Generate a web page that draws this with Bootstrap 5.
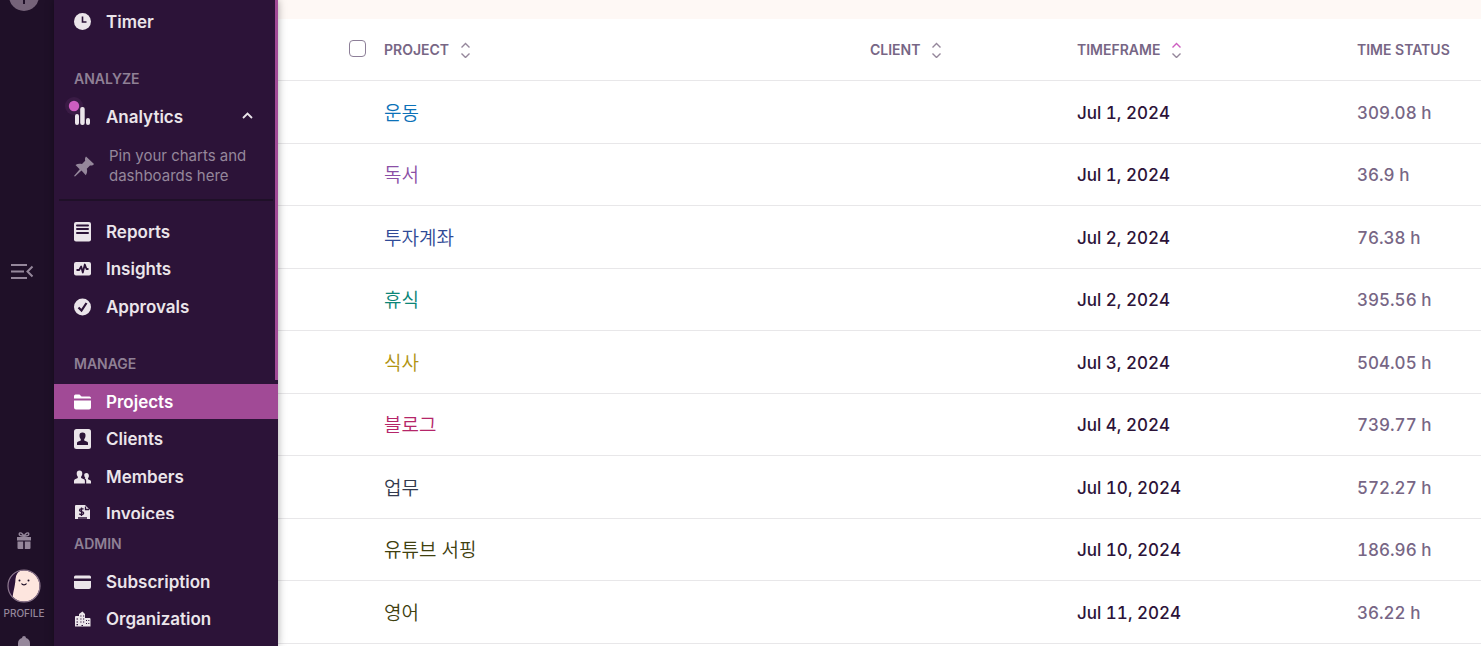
<!DOCTYPE html>
<html lang="en">
<head>
<meta charset="utf-8">
<meta name="viewport" content="width=device-width, initial-scale=1">
<title>Projects</title>
<link href="https://cdn.jsdelivr.net/npm/bootstrap@5.3.0/dist/css/bootstrap.min.css" rel="stylesheet">
<style>
  body { font-family: Inter, "Noto Sans CJK KR", sans-serif; color: #2c1338; background: #fff; }
  .rail { width: 54px; background: #1f1028; color: #95879b; padding-right: 6px; }
  .rail button, .rail a { color: inherit; background: none; border: 0; padding: 0; display: block; text-decoration: none; }
  .rail svg, .side svg, .sorter svg { display: block; }
  .rail .rail-add { margin-top: -19px; }
  .rail-foot { gap: 20px; margin-bottom: -8px; }
  .profile-link { font-size: 10px; line-height: 12px; font-weight: 500; text-align: center; }
  .profile-link svg { margin: 0 auto 4px; }
  .rail-foot .bell { margin-top: -3px; }

  .side { width: 224px; background: #2c1338; color: #ebe5ea; box-shadow: 0 0 8px rgba(0,0,0,.35); z-index: 1; }
  .side-scroll { min-height: 0; padding-top: 4px; }
  .side-thumb { right: 0; top: 0; width: 3px; height: 380px; background: #a14a96; }
  .side-title { font-size: 14px; line-height: 20px; font-weight: 600; color: #8f8095; margin: 30px 0 10px; padding-left: 20px; }
  .side-foot { padding: 15px 0 10px; }
  .side-foot .side-title { margin-top: 0; }
  .side-list { list-style: none; margin: 0; padding: 0; }
  .side-list li:nth-child(odd) { margin-bottom: 2px; }
  .side-list li:nth-child(even) { margin-bottom: 3px; }
  .side-list li:last-child { margin-bottom: 0; }
  .side-item { display: flex; align-items: center; gap: 14px; width: 100%; height: 35px; padding: 0 25px 0 20px; border: 0; background: none; color: inherit; font-size: 17px; line-height: 24px; font-weight: 600; text-decoration: none; }
  .side-item.active { background: #a14a96; color: #fff; }
  .side-item svg { overflow: visible; flex: none; }
  .pin-note { gap: 14px; margin: 12px 0 13px; padding-left: 20px; font-size: 15px; line-height: 20px; color: #95879b; }
  .side-rule { height: 2px; background: #1f1028; margin: 0 5px 13px; }

  .banner { height: 19px; background: #fef8f5; }
  .projects { table-layout: fixed; width: 100%; border-collapse: collapse; }
  .projects th, .projects td { padding: 2px 0 0; border-bottom: 1px solid #e8e7e9; vertical-align: middle; white-space: nowrap; }
  .projects thead tr { height: 61px; }
  .projects th { font-size: 14px; line-height: 20px; font-weight: 600; color: #776685; }
  .projects tbody tr { height: 62px; }
  .projects tbody tr:nth-child(odd) { height: 63px; }
  .projects td { font-size: 17px; line-height: 24px; font-weight: 500; font-variant-numeric: tabular-nums; }
  .projects .hours { color: #776685; }
  .projects td a { display: inline-block; padding-top: 2px; font-size: 19px; font-weight: 350; text-decoration: none; }
  .col-check { width: 106px; } .col-client { width: 207px; } .col-frame { width: 280px; } .col-status { width: 124px; }
  .projects .form-check-input { display: block; width: 17px; height: 17px; margin: 0 0 4px 71px; border: 1px solid #8d7f98; border-radius: 4px; }
  .sorter { color: #95879b; background: none; border: 0; padding: 0; margin-left: 11px; }
  .c-blue { color: #0b71b8; } .c-violet { color: #8b4fa6; } .c-indigo { color: #2f4a96; } .c-teal { color: #0b8577; }
  .c-gold { color: #b09310; } .c-pink { color: #b52569; } .c-slate { color: #333a4d; } .c-olive { color: #40400f; }
</style>
</head>
<body>
<div class="d-flex vh-100 overflow-hidden">

  <nav class="rail d-flex flex-column align-items-center flex-shrink-0" aria-label="Workspace">
    <button type="button" class="rail-add" aria-label="Add">
      <svg width="30" height="30"><circle cx="15" cy="15" r="15" fill="#756379"/><path d="M15 8v15M8 15h14" stroke="#1f1028" stroke-width="2"/></svg>
    </button>
    <button type="button" class="my-auto" aria-label="Collapse menu">
      <svg width="26" height="18" fill="none" stroke="currentColor" stroke-width="2"><path d="M0 2h16M0 8.500h13M0 15h16M21.500 3.500l-5 5 5 5"/></svg>
    </button>
    <div class="rail-foot d-flex flex-column align-items-center">
      <button type="button" aria-label="Gifts">
        <svg width="16" height="17" fill="currentColor"><path d="M1 5h14v3.500H1zM1.500 9.500h5.700V17H2.500a1 1 0 0 1-1-1zM8.800 9.500h5.700V16a1 1 0 0 1-1 1H8.800z"/><path d="M8 4.500C7 1.500 3.500-.5 3.200 2c-.2 1.600 2 2.200 4.800 2.200 2.800 0 5-.6 4.800-2.200C12.500-.5 9 1.500 8 4.500z" fill="none" stroke="currentColor" stroke-width="1.400"/></svg>
      </button>
      <a href="#" class="profile-link">
        <svg width="34" height="34"><defs><clipPath id="face"><circle cx="17" cy="17" r="15.500"/></clipPath></defs>
          <circle cx="17" cy="17" r="16" fill="#2c1338"/>
          <path clip-path="url(#face)" d="M5.500 34C5 24 8 20 8.500 10 9 3 14 0 20 0h14v34z" fill="#fde5de"/>
          <circle cx="17" cy="17" r="16" fill="none" stroke="#8f7a90" stroke-width="1.200"/>
          <g fill="#1f1028"><circle cx="12.500" cy="11.500" r="1"/><circle cx="21.500" cy="11.500" r="1"/></g><path d="M14.500 14.500c1 1.700 4 1.700 5 0" fill="none" stroke="#1f1028" stroke-width="1.200"/></svg>
        PROFILE
      </a>
      <button type="button" class="bell" aria-label="Notifications">
        <svg width="16" height="18" fill="currentColor"><path d="M8 0a2 2 0 0 1 2 2c2.600.8 4 2.800 4 5.500V12l2 2v1H0v-1l2-2V7.500C2 4.800 3.400 2.800 6 2a2 2 0 0 1 2-2z"/></svg>
      </button>
    </div>
  </nav>

  <aside class="side d-flex flex-column flex-shrink-0 position-relative">
    <div class="side-scroll flex-fill overflow-hidden">
      <a href="#" class="side-item"><svg width="18" height="20"><circle cx="8.500" cy="9.500" r="8.500" fill="currentColor"/><path d="M8.500 4.500v5.500h4" fill="none" stroke="#2c1338" stroke-width="1.600"/></svg>Timer</a>

      <h2 class="side-title">ANALYZE</h2>
      <button type="button" class="side-item" aria-expanded="true">
        <svg width="18" height="20"><circle cx="0" cy="-1" r="9" fill="#3a1b45"/><g fill="currentColor"><rect x="1" y="7" width="4" height="11" rx="2"/><rect x="6.200" y="0" width="4.500" height="18" rx="2"/><rect x="12" y="11" width="4" height="7" rx="2"/></g><circle cx="0" cy="-1" r="5.200" fill="#cd5dc0"/></svg>
        Analytics
        <svg class="ms-auto" width="11" height="10" fill="none" stroke="currentColor" stroke-width="1.800"><path d="M1 6l4.500-4.500L10 6"/></svg>
      </button>
      <div class="pin-note d-flex align-items-center">
        <svg width="21" height="21" fill="currentColor"><path d="M12 0.500 20 8c-1 1.700-2.600 1.700-4 1.500l-3.200 3.200c.8 2.600.2 4.600-1 6.500l-4.300-4.700-6.500 6L0 20l5.700-6.800L1.500 9c2-1.300 4-1.600 6.500-.9l3.200-3.300C10.800 3.200 10.900 1.600 12 .5z"/></svg>
        <span>Pin your charts and<br>dashboards here</span>
      </div>
      <div class="side-rule"></div>
      <ul class="side-list">
        <li><a href="#" class="side-item"><svg width="18" height="20"><rect width="17" height="19.500" rx="2" fill="currentColor"/><path d="M3 3.500h11M3 7h11M3 11h11" stroke="#2c1338" stroke-width="2" stroke-linecap="round"/></svg>Reports</a></li>
        <li><a href="#" class="side-item"><svg width="18" height="20"><rect y="3" width="17" height="13.500" rx="2" fill="currentColor"/><path d="M2.500 11h2.700l2-3.500 1.600 6 2-8 1.700 4.500h2" fill="none" stroke="#2c1338" stroke-width="1.800" stroke-linejoin="round"/></svg>Insights</a></li>
        <li><a href="#" class="side-item"><svg width="18" height="20"><circle cx="8.500" cy="10" r="8.500" fill="currentColor"/><path d="M4.500 10.500l3 3 5-7.500" fill="none" stroke="#2c1338" stroke-width="2.200"/></svg>Approvals</a></li>
      </ul>

      <h2 class="side-title">MANAGE</h2>
      <ul class="side-list">
        <li><a href="#" class="side-item active" aria-current="page"><svg width="18" height="20" fill="currentColor"><path d="M0 6.500V4a1.500 1.500 0 0 1 1.500-1.500H5.500L7.500 4.500H15.500A1.500 1.500 0 0 1 17 6v.5zM0 8.500h17v7a2 2 0 0 1-2 2H2a2 2 0 0 1-2-2z"/></svg>Projects</a></li>
        <li><a href="#" class="side-item"><svg width="18" height="20"><rect width="17" height="20" rx="2.500" fill="currentColor"/><path d="M8.500 3.500a3 3 0 0 1 3 3.200c0 1.500-.6 2.800-1.300 3.500v1.300l3 1.200c.6.300.8.800.8 1.500V16H3v-1.800c0-.7.200-1.200.8-1.500l3-1.200v-1.300C6.100 9.500 5.500 8.200 5.500 6.700a3 3 0 0 1 3-3.200z" fill="#2c1338"/></svg>Clients</a></li>
        <li><a href="#" class="side-item"><svg width="18" height="20" fill="currentColor"><path d="M5.500 3.500c1.800 0 2.800 1.300 2.800 3 0 1.400-.5 2.500-1.200 3.200v1.200l2.800 1.300c.8.400 1 1 1 1.800v2.500H0V14c0-.8.300-1.400 1-1.800l2.800-1.300V9.700C3.100 9 2.700 7.900 2.700 6.500c0-1.700 1-3 2.800-3zM12.500 6c1.500 0 2.400 1.200 2.400 2.700 0 1.200-.4 2-.9 2.600v1l2.200 1c.6.300.8.700.8 1.300v1.900h-4.800v-2.600c0-1.300-.6-2-1.500-2.400.3-.2.500-.6.500-1-.6-.5-1-1.300-1-2.400C10.200 6.900 11 6 12.500 6z"/></svg>Members</a></li>
        <li><a href="#" class="side-item"><svg width="18" height="20"><path d="M1 2a1 1 0 0 1 1-1h9l5 5v13a1 1 0 0 1-1 1H2a1 1 0 0 1-1-1z" fill="currentColor"/><g fill="none" stroke="#2c1338" stroke-width="1.300"><path d="M4 14h9M11.500 2.500v3H15M9.500 5.300c-1-.9-4-.8-4 .9s4.200 1 4.200 2.800-3.200 2-4.400.7M7.500 3.500v8.500"/></g></svg>Invoices</a></li>
      </ul>
    </div>
    <div class="side-foot">
      <h2 class="side-title">ADMIN</h2>
      <ul class="side-list">
        <li><a href="#" class="side-item"><svg width="18" height="20" fill="currentColor"><path d="M0 6.500V5a1.500 1.500 0 0 1 1.500-1.500h14A1.500 1.500 0 0 1 17 5v1.500zM0 9h17v6a2 2 0 0 1-2 2H2a2 2 0 0 1-2-2z"/></svg>Subscription</a></li>
        <li><a href="#" class="side-item"><svg width="18" height="20"><path d="M1 17.500V8a1 1 0 0 1 1-1h3V5l3.500-2.500L11 5v4h4.500a1 1 0 0 1 1 1v7.500z" fill="currentColor"/><path d="M2.500 10h1.500M2.500 13h1.500M2.500 15.700h1.500M6.300 7h1.200M6.300 10h1.200M6.300 13h1.200M9 7h1.200M9 10h1.200M9 13h1.200M12 11.500h1M12 14.500h1M14.300 11.500h1M14.300 14.500h1M7.500 16.500h1.500" stroke="#2c1338" stroke-width="1.200"/></svg>Organization</a></li>
      </ul>
    </div>
    <div class="side-thumb position-absolute"></div>
  </aside>

  <main class="flex-fill overflow-hidden">
    <div class="banner"></div>
    <table class="projects">
      <colgroup><col class="col-check"><col><col class="col-client"><col class="col-frame"><col class="col-status"></colgroup>
      <thead>
        <tr>
          <th><input class="form-check-input" type="checkbox" aria-label="Select all projects"></th>
          <th><div class="d-flex align-items-center">PROJECT<button type="button" class="sorter" aria-label="Sort by project"><svg width="11" height="16" fill="none" stroke="currentColor" stroke-width="1.400"><path d="M1.500 5.500l4-4 4 4M1.500 11.500l4 4 4-4"/></svg></button></div></th>
          <th><div class="d-flex align-items-center">CLIENT<button type="button" class="sorter" aria-label="Sort by client"><svg width="11" height="16" fill="none" stroke="currentColor" stroke-width="1.400"><path d="M1.500 5.500l4-4 4 4M1.500 11.500l4 4 4-4"/></svg></button></div></th>
          <th><div class="d-flex align-items-center">TIMEFRAME<button type="button" class="sorter" aria-label="Sort by timeframe"><svg width="11" height="16" fill="none" stroke="currentColor" stroke-width="1.400"><path d="M1.500 5.500l4-4 4 4" stroke="#cd5dc0"/><path d="M1.500 11.500l4 4 4-4"/></svg></button></div></th>
          <th>TIME STATUS</th>
        </tr>
      </thead>
      <tbody>
        <tr><td></td><td><a href="#" class="c-blue">운동</a></td><td></td><td>Jul 1, 2024</td><td class="hours">309.08 h</td></tr>
        <tr><td></td><td><a href="#" class="c-violet">독서</a></td><td></td><td>Jul 1, 2024</td><td class="hours">36.9 h</td></tr>
        <tr><td></td><td><a href="#" class="c-indigo">투자계좌</a></td><td></td><td>Jul 2, 2024</td><td class="hours">76.38 h</td></tr>
        <tr><td></td><td><a href="#" class="c-teal">휴식</a></td><td></td><td>Jul 2, 2024</td><td class="hours">395.56 h</td></tr>
        <tr><td></td><td><a href="#" class="c-gold">식사</a></td><td></td><td>Jul 3, 2024</td><td class="hours">504.05 h</td></tr>
        <tr><td></td><td><a href="#" class="c-pink">블로그</a></td><td></td><td>Jul 4, 2024</td><td class="hours">739.77 h</td></tr>
        <tr><td></td><td><a href="#" class="c-slate">업무</a></td><td></td><td>Jul 10, 2024</td><td class="hours">572.27 h</td></tr>
        <tr><td></td><td><a href="#" class="c-olive">유튜브 서핑</a></td><td></td><td>Jul 10, 2024</td><td class="hours">186.96 h</td></tr>
        <tr><td></td><td><a href="#" class="c-olive">영어</a></td><td></td><td>Jul 11, 2024</td><td class="hours">36.22 h</td></tr>
      </tbody>
    </table>
  </main>
</div>
<script src="https://cdn.jsdelivr.net/npm/bootstrap@5.3.0/dist/js/bootstrap.bundle.min.js"></script>
</body>
</html>
